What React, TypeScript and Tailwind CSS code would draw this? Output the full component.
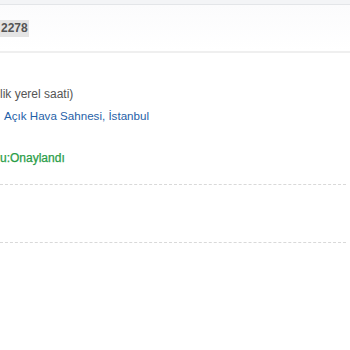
export default function App() {
  return (
    <div className="w-[350px] h-[350px] bg-white overflow-hidden" style={{ fontFamily: '"Liberation Sans", Arial, sans-serif' }}>
      <div className="h-[4px] bg-[#f3f4f6]" />
      <div className="border-t border-[#e3e5e8] bg-gradient-to-b from-[#fbfbfc] to-white h-[49px] flex items-center border-b-2 border-b-[#efefef]">
        <span className="bg-[#e4e4e4] text-[#555] font-bold text-[12px] leading-[15px] px-[1px] py-[1px]">2278</span>
      </div>
      <div className="pt-[34px] text-[12px] leading-[14px] text-[#555]">lik yerel saati)</div>
      <div className="pt-[8px] pl-[4px] text-[11.6px] leading-[14px] text-[#1f5fa8]">Açık Hava Sahnesi, İstanbul</div>
      <div className="pt-[28px] text-[12px] leading-[14px] text-[#2a9d47] [-webkit-text-stroke:0.25px_#2a9d47]">u:Onaylandı</div>
      <div className="mt-[19px] w-[346px] border-t border-dashed border-[#d9d9d9]" />
      <div className="mt-[57px] w-[346px] border-t border-dashed border-[#d9d9d9]" />
    </div>
  );
}
